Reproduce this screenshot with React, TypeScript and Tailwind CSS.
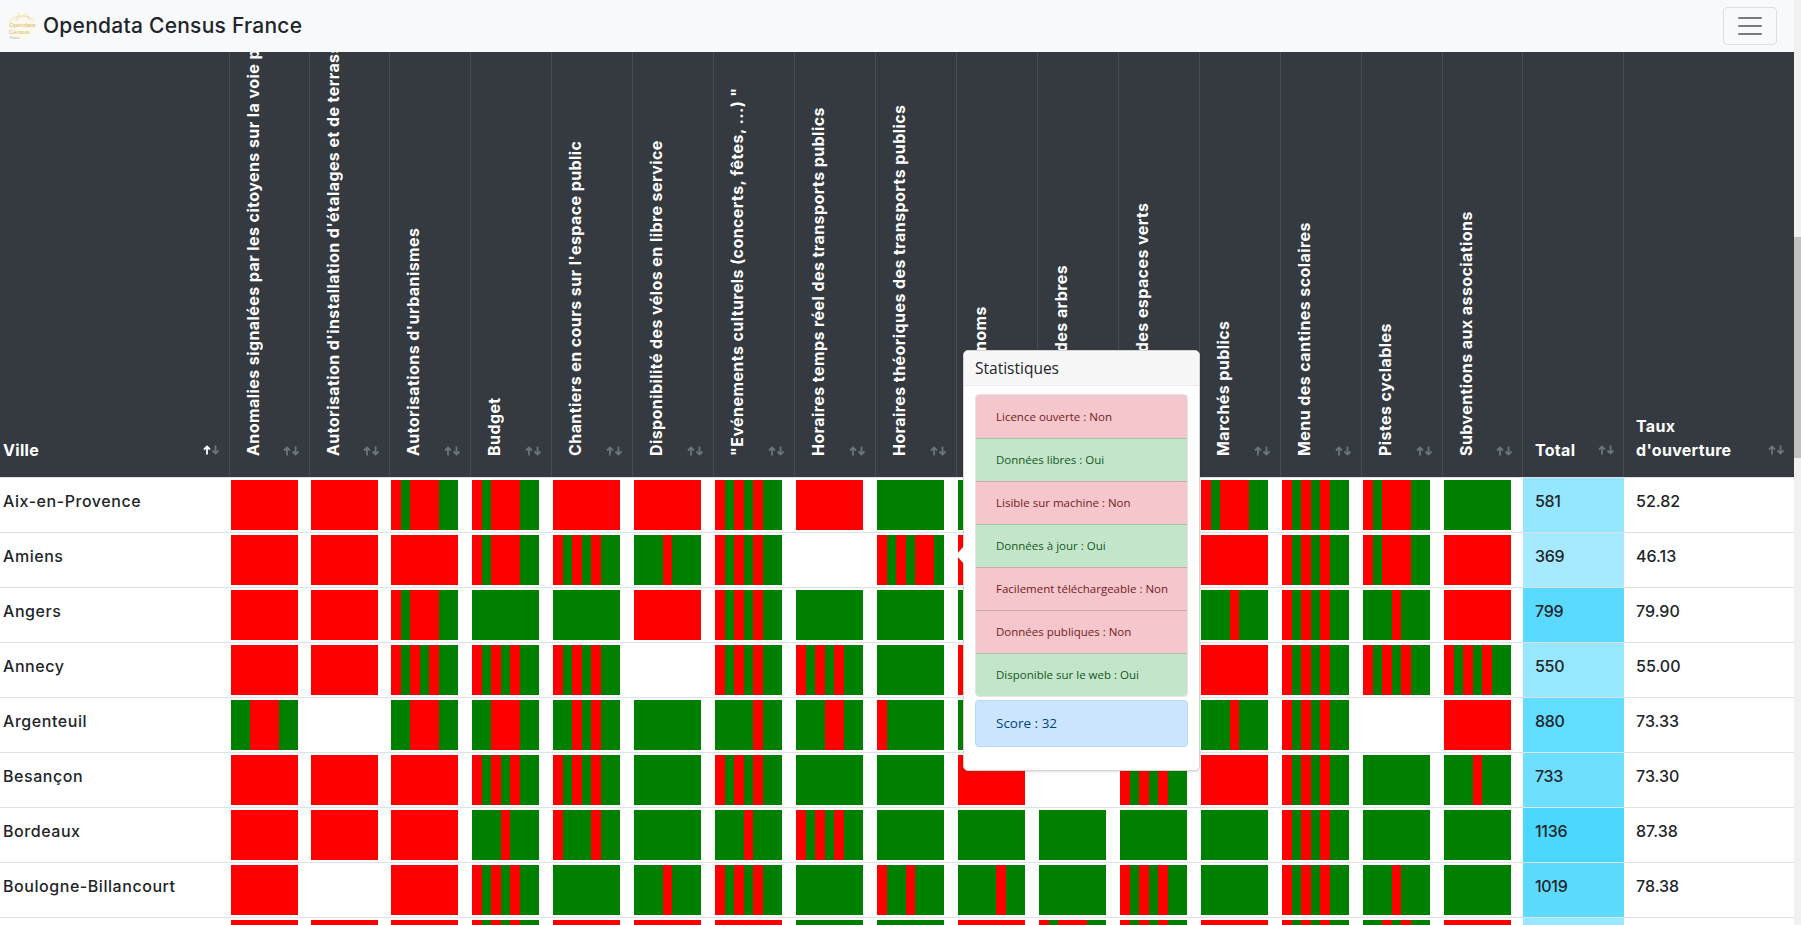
const R = "0000000";
const G = "1111111";
const A = "0100011"; // R G R R R G G
const B = "0101011";
const C = "1110111";
const D = "1100011";
const E = "";

const columns = [
  "Anomalies signalées par les citoyens sur la voie publique",
  "Autorisation d'installation d'étalages et de terrasses",
  "Autorisations d'urbanismes",
  "Budget",
  "Chantiers en cours sur l'espace public",
  "Disponibilité des vélos en libre service",
  "\"Evénements culturels (concerts, fêtes, ...) \"",
  "Horaires temps réel des transports publics",
  "Horaires théoriques des transports publics",
  "Liste des prénoms",
  "Localisation des arbres",
  "Localisation des espaces verts",
  "Marchés publics",
  "Menu des cantines scolaires",
  "Pistes cyclables",
  "Subventions aux associations",
];

const widths = [
  "w-[80px]", "w-[80px]", "w-[81px]", "w-[81px]", "w-[81px]", "w-[81px]", "w-[81px]", "w-[81px]",
  "w-[81px]", "w-[81px]", "w-[81px]", "w-[81px]", "w-[81px]", "w-[81px]", "w-[81px]", "w-[80px]",
];

const rows = [
  { city: "Aix-en-Provence", total: "581", rate: "52.82", bg: "bg-[#95e6ff]", cells: [R, R, A, A, R, R, B, R, G, G, G, B, A, B, A, G] },
  { city: "Amiens", total: "369", rate: "46.13", bg: "bg-[#a5eaff]", cells: [R, R, R, A, B, C, B, E, "0101001", R, G, B, R, B, A, R] },
  { city: "Angers", total: "799", rate: "79.90", bg: "bg-[#5adaff]", cells: [R, R, A, G, G, R, B, G, G, G, G, B, C, B, C, R] },
  { city: "Annecy", total: "550", rate: "55.00", bg: "bg-[#96e7ff]", cells: [R, R, B, B, B, E, B, B, G, R, G, B, R, B, B, B] },
  { city: "Argenteuil", total: "880", rate: "73.33", bg: "bg-[#62dcff]", cells: [D, E, D, D, "1101011", G, "1111011", "1110011", "0111111", G, G, B, C, B, E, R] },
  { city: "Besançon", total: "733", rate: "73.30", bg: "bg-[#6fdfff]", cells: [R, R, R, B, B, G, B, G, G, R, E, B, R, B, G, C] },
  { city: "Bordeaux", total: "1136", rate: "87.38", bg: "bg-[#4cd7ff]", cells: [R, R, R, C, "0111011", G, C, B, G, G, G, G, G, B, G, G] },
  { city: "Boulogne-Billancourt", total: "1019", rate: "78.38", bg: "bg-[#5cdbff]", cells: [R, E, R, B, G, C, B, G, "0110111", "1111011", G, B, G, B, C, G] },
  // only the top of this row is on screen, its texts fall below the fold
  { city: "", total: "", rate: "", bg: "bg-[#96e7ff]", cells: [R, R, R, B, R, R, R, G, G, R, A, B, R, B, "1101011", R] },
];

const stats = [
  { label: "Licence ouverte : Non", ok: false },
  { label: "Données libres : Oui", ok: true },
  { label: "Lisible sur machine : Non", ok: false },
  { label: "Données à jour : Oui", ok: true },
  { label: "Facilement téléchargeable : Non", ok: false },
  { label: "Données publiques : Non", ok: false },
  { label: "Disponible sur le web : Oui", ok: true },
];

function SortIcon({ active }: { active?: boolean }) {
  return (
    <svg width="17" height="10" viewBox="0 0 17 10" className="shrink-0" fill="none" strokeWidth="1.8">
      <path d="M4 9.5V1.5M1 4.5l3-3 3 3" stroke={active ? "#ffffff" : "#6c757d"} />
      <path d="M12.5 0.5v8M9.5 5.5l3 3 3-3" stroke="#6c757d" />
    </svg>
  );
}

function Logo() {
  return (
    <svg width="30" height="30" viewBox="0 0 30 30" className="shrink-0">
      <circle cx="15" cy="15" r="14" fill="#fbf8ee" />
      <path d="M3 11C7 3 22 2 28 11M8 9c3-4 12-5 17 0M13 2c-2 3-3 5-3 8M18 2c2 2 3 5 4 8" stroke="#e0cf9f" strokeWidth="0.5" fill="none" />
      <text x="2" y="16" fontSize="6" fill="#d8b766" fontFamily="Liberation Sans, sans-serif">Opendata</text>
      <text x="2" y="23" fontSize="6" fill="#d8b766" fontFamily="Liberation Sans, sans-serif">Census</text>
      <text x="3" y="28" fontSize="3" fill="#b5a98a" fontFamily="Liberation Sans, sans-serif">France</text>
    </svg>
  );
}

function Bar({ code }: { code: string }) {
  if (!code) return <div className="h-[50px] w-[67px]" />;
  return (
    <div className="flex h-[50px] w-[67px]">
      {code.split("").map((c, i) => (
        <div key={i} className={c === "1" ? "flex-1 bg-[#008000]" : "flex-1 bg-[#ff0000]"} />
      ))}
    </div>
  );
}

function Popover() {
  return (
    <div className="absolute left-[963px] top-[298px] w-[237px] h-[421px] bg-white border border-[#d5d5d5] rounded-[5px] shadow-sm font-['Open_Sans','Liberation_Sans',sans-serif]">
      <div className="absolute left-[-8px] top-[195px] size-0 border-y-[9px] border-r-[8px] border-y-transparent border-r-white" />
      <div className="h-[35px] bg-[#f7f7f7] border-b border-[#ebebeb] rounded-t-[5px] px-[11px] pt-[5px] text-[15.5px] font-medium leading-6 text-[#212529]">
        Statistiques
      </div>
      <div className="px-[11px] pt-2">
        <div className="rounded overflow-hidden border border-black/10">
          {stats.map((s, i) => (
            <div
              key={s.label}
              className={`h-[43px] px-5 flex items-center text-[11.5px] whitespace-nowrap ${i > 0 ? "border-t border-black/15" : ""} ${s.ok ? "bg-[#c3e6cb] text-[#155724]" : "bg-[#f5c6cb] text-[#721c24]"}`}
            >
              {s.label}
            </div>
          ))}
        </div>
        <div className="mt-[3px] h-[47px] px-5 flex items-center rounded bg-[#cce5ff] border border-[#b8daff] text-[13.5px] text-[#004085]">
          Score : 32
        </div>
      </div>
    </div>
  );
}

export default function App() {
  return (
    <div className="h-[925px] w-[1801px] overflow-hidden flex font-['Inter','Liberation_Sans',sans-serif]">
      <div className="w-[1794px] flex flex-col">
        <nav className="h-[52px] shrink-0 bg-[#f8f9fa] flex items-center justify-between pl-[7px] pr-[17px]">
          <div className="flex items-center gap-[6px]">
            <Logo />
            <span className="text-[21px] font-medium tracking-[0.25px] text-[#212529]">Opendata Census France</span>
          </div>
          <button className="w-[54px] h-[38px] border border-black/10 rounded flex items-center justify-center">
            <svg width="30" height="30" viewBox="0 0 30 30">
              <path d="M4 7h22M4 15h22M4 23h22" stroke="rgba(0,0,0,0.5)" strokeWidth="2" strokeLinecap="round" />
            </svg>
          </button>
        </nav>
        <div className="relative flex-1 overflow-hidden">
          <table className="table-fixed w-[1794px] border-separate border-spacing-0 text-[16px] text-[#212529]">
            <thead>
              <tr className="bg-[#343a40] text-white">
                <th className="w-[230px] h-[425px] align-bottom border-r border-[#454d55] pl-[3px] pr-[9px] pb-[15px]">
                  <div className="flex items-end justify-between">
                    <span className="font-bold leading-6 tracking-[0.3px]">Ville</span>
                    <span className="mb-[7px]"><SortIcon active /></span>
                  </div>
                </th>
                {columns.map((c, i) => (
                  <th key={c} className={`${widths[i]} align-bottom border-r border-[#454d55] pl-[11px] pr-[9px] pb-[21px]`}>
                    <div className="flex items-end justify-between h-[404px]">
                      <div className="h-full overflow-hidden rotate-180 [writing-mode:vertical-rl] whitespace-nowrap text-left font-bold leading-6 tracking-[0.42px]">
                        {c}
                      </div>
                      <SortIcon />
                    </div>
                  </th>
                ))}
                <th className="w-[101px] align-bottom border-r border-[#454d55] pl-3 pr-[8px] pb-[15px]">
                  <div className="flex items-end justify-between">
                    <span className="font-bold leading-6 tracking-[0.3px]">Total</span>
                    <span className="mb-[7px]"><SortIcon /></span>
                  </div>
                </th>
                <th className="align-bottom pl-3 pr-[9px] pb-[15px]">
                  <div className="flex items-end justify-between">
                    <span className="font-bold text-left leading-6 tracking-[0.3px]">Taux d'ouverture</span>
                    <span className="mb-[7px]"><SortIcon /></span>
                  </div>
                </th>
              </tr>
            </thead>
            <tbody>
              {rows.map((r, n) => (
                <tr key={n}>
                  <td className="align-top border-t border-[#dee2e6] px-[3px] pt-[11px] font-medium tracking-[0.55px] whitespace-nowrap">{r.city}</td>
                  {r.cells.map((code, i) => (
                    <td key={i} className="border-t border-[#dee2e6] pl-px py-[2px] align-top">
                      <Bar code={code} />
                    </td>
                  ))}
                  <td className={`align-top border-t border-[#dee2e6] px-3 pt-[11px] font-medium tracking-[-0.3px] ${r.bg}`}>{r.total}</td>
                  <td className="align-top border-t border-[#dee2e6] px-3 pt-[11px] font-medium">{r.rate}</td>
                </tr>
              ))}
            </tbody>
          </table>
          <Popover />
        </div>
      </div>
      <div className="w-[7px] bg-[#f1f1f1] pt-[237px]">
        <div className="h-[221px] bg-[#c1c1c1]" />
      </div>
    </div>
  );
}
